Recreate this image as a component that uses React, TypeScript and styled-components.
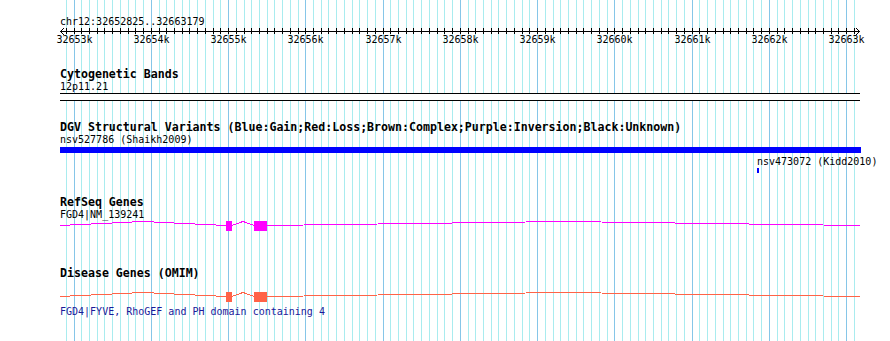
import React from "react";
import styled, { createGlobalStyle } from "styled-components";

const GlobalStyle = createGlobalStyle`
  html, body {
    margin: 0;
    padding: 0;
    background: #ffffff;
  }
  body {
    font-family: "DejaVu Sans Mono", "Liberation Mono", monospace;
  }
`;

// view window, in base pairs, mapped onto 60..860 px
const START = 32652825;
const END = 32663179;
const LEFT = 60;
const RIGHT = 860;
const toX = (bp: number) => LEFT + ((bp - START) * (RIGHT - LEFT)) / (END - START);

const minorTicks: { col: number; major: boolean; bp: number }[] = [];
for (let bp = Math.ceil(START / 100) * 100; bp <= END; bp += 100) {
  minorTicks.push({ col: Math.round(toX(bp)), major: bp % 1000 === 0, bp });
}

const Canvas = styled.div`
  position: relative;
  width: 890px;
  height: 341px;
  overflow: hidden;
  background: #ffffff;
`;

const GridLayer = styled.svg`
  position: absolute;
  inset: 0;
  z-index: 0;
`;

const Tracks = styled.div`
  position: relative;
  z-index: 1;
  display: flex;
  flex-direction: column;
`;

const Label = styled.div<{ $top: number; $left?: number; $color?: string }>`
  margin-top: ${(p) => p.$top}px;
  padding-left: ${(p) => p.$left ?? LEFT}px;
  height: 12px;
  line-height: 12px;
  font-size: 10px;
  white-space: nowrap;
  color: ${(p) => p.$color ?? "#000000"};
`;

const TrackTitle = styled.div<{ $top: number }>`
  margin-top: ${(p) => p.$top}px;
  padding-left: ${LEFT}px;
  height: 13px;
  line-height: 13px;
  font-size: 11.6px;
  font-weight: bold;
  white-space: nowrap;
  color: #000000;
`;

const Ruler = styled.svg`
  display: block;
  flex: none;
`;

const Band = styled.div`
  box-sizing: border-box;
  margin-left: ${LEFT}px;
  width: ${RIGHT - LEFT}px;
  height: 8px;
  border-top: 1px solid #000000;
  border-bottom: 1px solid #000000;
  background: #ffffff;
`;

const Segment = styled.div<{ $top: number; $left: number; $width: number; $height: number }>`
  margin-top: ${(p) => p.$top}px;
  margin-left: ${(p) => p.$left}px;
  width: ${(p) => p.$width}px;
  height: ${(p) => p.$height}px;
  background: #0000ff;
  flex: none;
`;

const GeneGlyph = styled.svg<{ $top: number }>`
  display: block;
  flex: none;
  margin-top: ${(p) => p.$top}px;
`;

const Grid = () => (
  <GridLayer width={890} height={341} shapeRendering="crispEdges">
    {minorTicks.map((t) => (
      <line
        key={t.bp}
        x1={t.col + 0.5}
        x2={t.col + 0.5}
        y1={0}
        y2={341}
        stroke={t.major ? "#86c6e8" : "#a9ecef"}
        strokeWidth={1}
      />
    ))}
  </GridLayer>
);

const Scale = () => (
  <Ruler width={890} height={18}>
    <g shapeRendering="crispEdges" stroke="#000000" fill="none">
      <line x1={LEFT} x2={RIGHT} y1={3.5} y2={3.5} />
      {minorTicks.map((t) => (
        <line key={t.bp} x1={t.col + 0.5} x2={t.col + 0.5} y1={0} y2={6} />
      ))}
      <polyline points="64,0 61,3.5 64,7" />
      <polyline points="856,0 859.5,3.5 856,7" />
    </g>
    {minorTicks
      .filter((t) => t.major)
      .map((t) => (
        <text
          key={t.bp}
          x={t.col + 0.5}
          y={15}
          textAnchor="middle"
          fontSize={10}
          fontFamily='"DejaVu Sans Mono", monospace'
          fill="#000000"
        >
          {t.bp / 1000}k
        </text>
      ))}
  </Ruler>
);

// exon boxes and intron hats; the gene runs off both edges of the view
const Gene: React.FC<{ color: string; top: number }> = ({ color, top }) => (
  <GeneGlyph $top={top} width={890} height={11} shapeRendering="crispEdges">
    <g stroke={color} fill="none" strokeWidth={1}>
      <polyline points="60,4.5 143,0.5 226,4.5" />
      <polyline points="232,4.5 243,0.5 254,4.5" />
      <polyline points="267,4.5 563.5,0.5 860,4.5" />
    </g>
    <rect x={226} y={0} width={6} height={10} fill={color} />
    <rect x={254} y={0} width={13} height={10} fill={color} />
  </GeneGlyph>
);

export default function App() {
  return (
    <>
      <GlobalStyle />
      <Canvas>
        <Grid />
        <Tracks>
          <Label $top={16}>chr12:32652825..32663179</Label>
          <Scale />

          <TrackTitle $top={22}>Cytogenetic Bands</TrackTitle>
          <Label $top={0}>12p11.21</Label>
          <Band />

          <TrackTitle $top={20}>
            DGV Structural Variants (Blue:Gain;Red:Loss;Brown:Complex;Purple:Inversion;Black:Unknown)
          </TrackTitle>
          <Label $top={0}>nsv527786 (Shaikh2009)</Label>
          <Segment $top={1} $left={LEFT} $width={801} $height={6} />
          <Label $top={3} $left={757}>
            nsv473072 (Kidd2010)
          </Label>
          <Segment $top={0} $left={757} $width={2} $height={5} />

          <TrackTitle $top={23}>RefSeq Genes</TrackTitle>
          <Label $top={0}>FGD4|NM_139241</Label>
          <Gene color="#ff00ff" top={0} />

          <TrackTitle $top={35}>Disease Genes (OMIM)</TrackTitle>
          <Gene color="#ff6347" top={12} />
          <Label $top={3} $color="#1a1a9a">
            FGD4|FYVE, RhoGEF and PH domain containing 4
          </Label>
        </Tracks>
      </Canvas>
    </>
  );
}
